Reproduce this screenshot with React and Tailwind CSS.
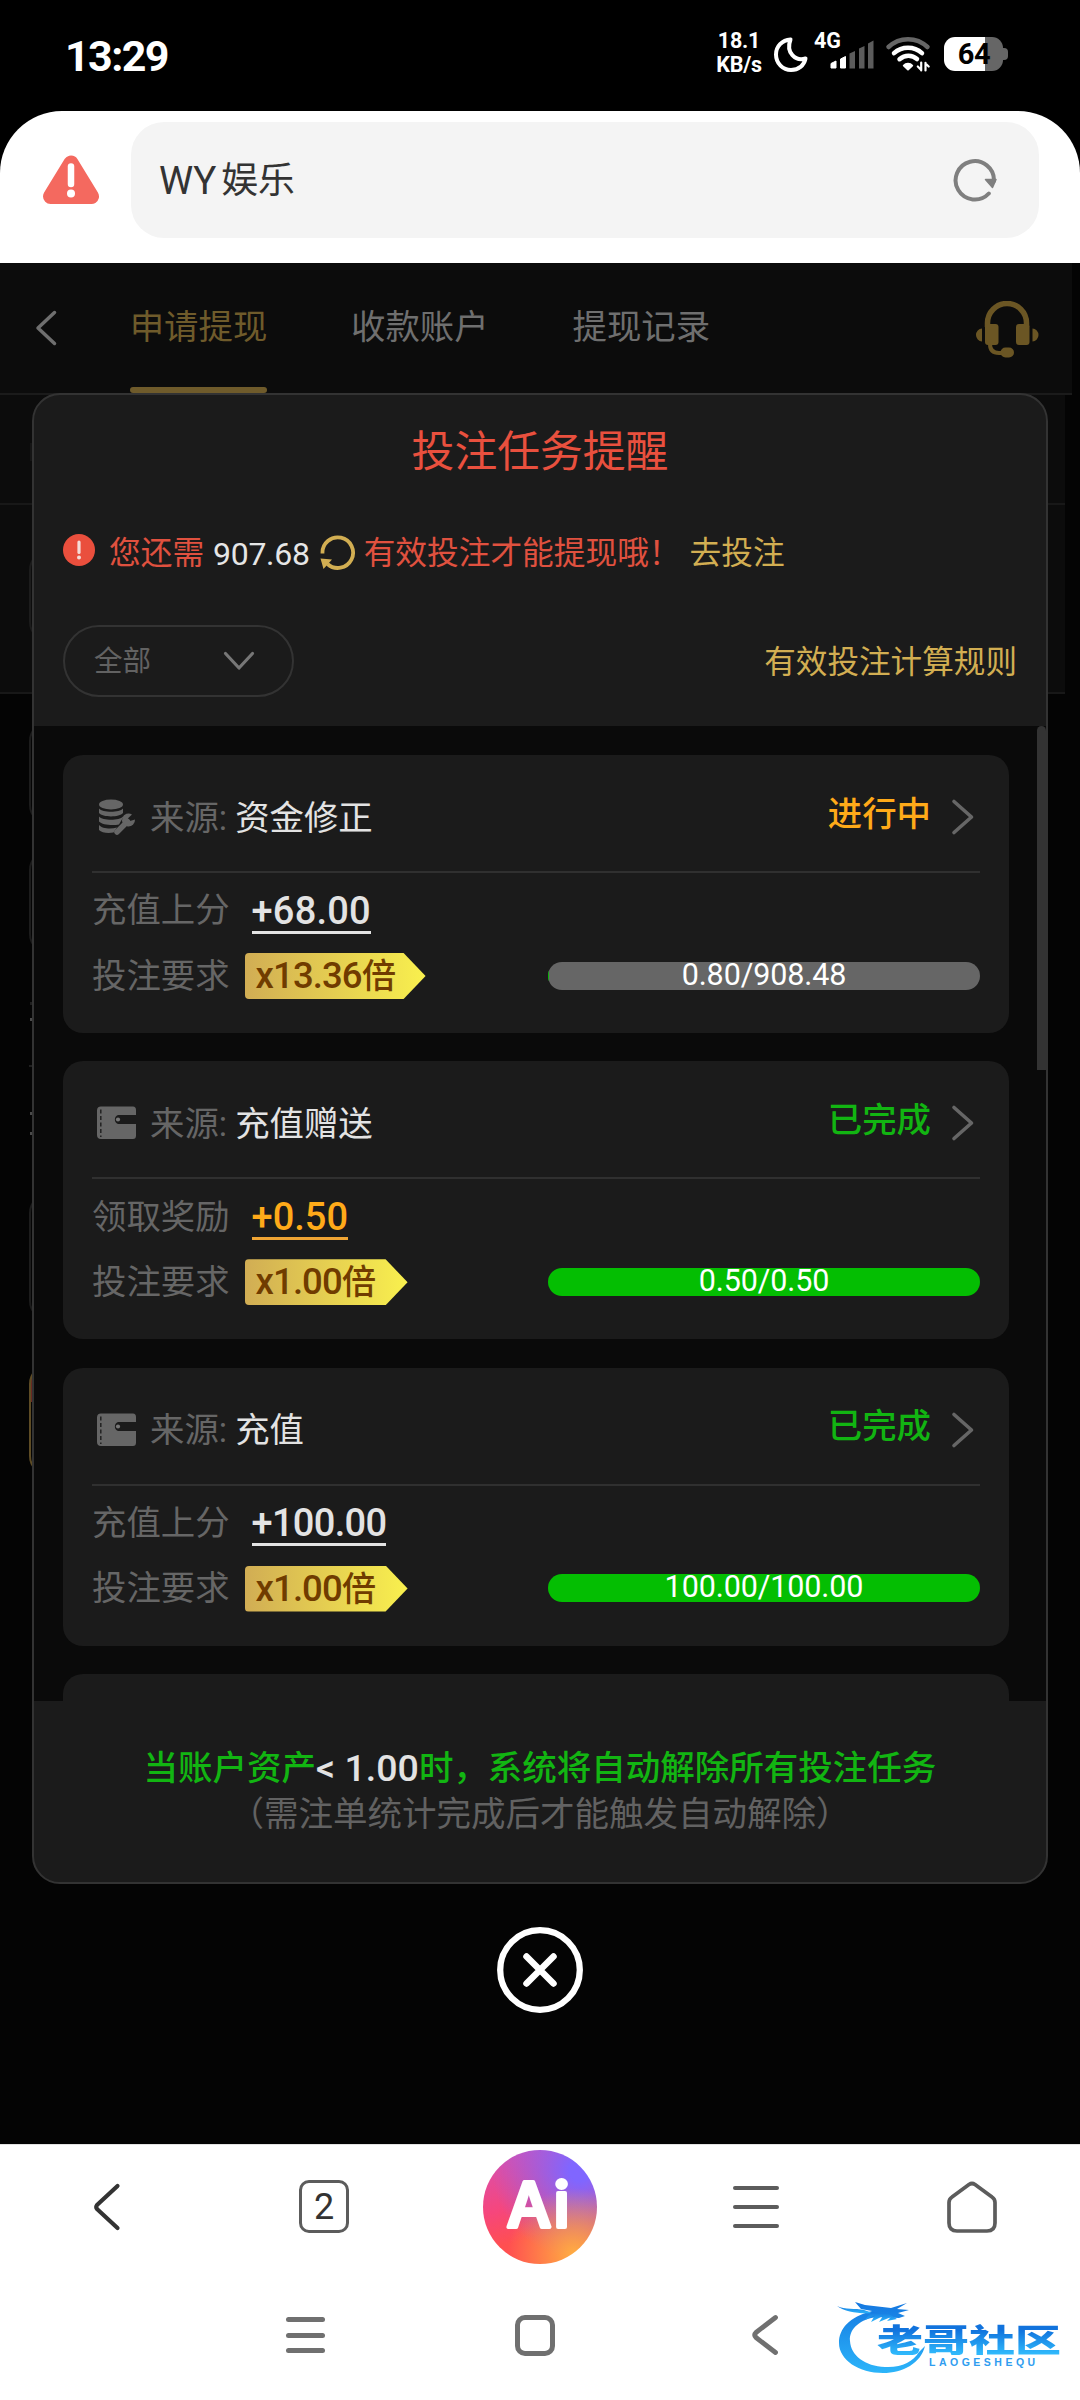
import React from "react";

const CJK = "font-['Roboto','Noto_Sans_CJK_SC',sans-serif]";

/* ---------- status bar ---------- */

function SignalBars() {
  return (
    <svg width="45" height="30" viewBox="0 0 45 30">
      <path d="M1 29V24.5L6 22V29Z" fill="#fff" stroke="#fff" strokeWidth="1" strokeLinejoin="round" />
      <path d="M10.500 29V20L15.500 17.500V29Z" fill="#fff" stroke="#fff" strokeWidth="1" strokeLinejoin="round" />
      <g fill="#5c5c5c">
        <path d="M19.500 29.500V14.500L25 12V29.500Z" />
        <path d="M29 29.500V9.500L34.500 7V29.500Z" />
        <path d="M38 29.500V4.500L43.500 1.500V29.500Z" />
      </g>
    </svg>
  );
}

function Wifi() {
  return (
    <svg width="46" height="36" viewBox="0 0 46 36" fill="none" strokeLinecap="round">
      <path d="M3.500 11C14.500 .5 31.500 .5 42.500 11" stroke="#666" strokeWidth="4.500" />
      <path d="M9 17.200C17 10 29 10 37 17.200" stroke="#fff" strokeWidth="4.500" />
      <path d="M14.500 23.200C20 18.600 27 18.600 32 23" stroke="#fff" strokeWidth="4.500" />
      <path d="M18.800 29.600C21 27 25 27 27.200 29.600L23 33.500Z" fill="#fff" stroke="#fff" strokeWidth="2" strokeLinejoin="round" />
      <path d="M36.200 34.500V26.500M36.200 34L32.800 30.500M40.500 34.500V26.800M40.500 27.500L43.700 30.500" stroke="#fff" strokeWidth="2.200" />
    </svg>
  );
}

function StatusBar() {
  return (
    <div className="flex h-[111px] items-start bg-black pl-[65px] pr-[72px] font-['Roboto',sans-serif] text-white">
      <div className="mt-[34px] flex-1 text-[43px] font-bold leading-[44px] tracking-[-1.600px]">13:29</div>
      <div className="mt-[29px] w-[48px] text-center text-[21.500px] font-bold leading-[23.500px] tracking-[-0.2px]">
        <div>18.1</div>
        <div>KB/s</div>
      </div>
      <svg className="ml-[10px] mt-[36px]" width="36" height="37" viewBox="0 0 36 37" fill="none" stroke="#fff" strokeWidth="4" strokeLinejoin="round">
        <path d="M17.500 3.500C9 4 3 10.500 3 18.500C3 27.500 10 34 18 34C25.500 34 31 29.500 32.500 22.500C22.500 25.500 12.500 17 17.500 3.500Z" />
      </svg>
      <div className="ml-[5px] mt-[29px] w-[16px] whitespace-nowrap text-[21.500px] font-bold leading-[23.500px]">4G</div>
      <div className="mt-[39px]">
        <SignalBars />
      </div>
      <div className="ml-[10px] mt-[36px]">
        <Wifi />
      </div>
      <div className="ml-[13px] mt-[37px] flex items-center">
        <div className="flex h-[34px] w-[59px] items-center justify-center rounded-[11px] bg-[linear-gradient(90deg,#fff_41px,#666_41px)] text-[29px] font-bold leading-none tracking-[-0.5px] text-black">
          <span className="ml-[1px]">64</span>
        </div>
        <div className="h-[12px] w-[5px] rounded-r-[4px] bg-[#666]" />
      </div>
    </div>
  );
}

/* ---------- browser bar ---------- */

function BrowserBar() {
  return (
    <div className="bg-black">
      <div className="flex h-[152px] items-start rounded-t-[62px] bg-white pl-[42px] pr-[41px] pt-[11px]">
        <svg className="mt-[32px]" width="58" height="51" viewBox="0 0 58 51">
          <path d="M29 9L49.500 42.500H8.500Z" fill="#f4695f" stroke="#f4695f" strokeWidth="15" strokeLinejoin="round" />
          <path d="M29 12.500V30" stroke="#fff" strokeWidth="6.500" strokeLinecap="round" />
          <circle cx="29" cy="39.500" r="4" fill="#fff" />
        </svg>
        <div className={`ml-[31px] flex h-[116px] flex-1 items-center justify-between rounded-[33px] bg-[#f4f4f4] pl-[28px] pr-[41px] text-[#333] ${CJK}`}>
          <div className="flex items-center whitespace-nowrap pt-[2px] text-[36.800px] leading-none">
            <span className="text-[38.500px]">WY</span>
            <span className="ml-[5px]">娱乐</span>
          </div>
          <svg className="-mt-[2px]" width="46" height="46" viewBox="0 0 46 46" fill="none">
            <path d="M36.800 37.500A19.200 19.200 0 1 1 42 25" stroke="#7f7f7f" strokeWidth="4" strokeLinecap="round" />
            <path d="M33.500 23.500H44L40.500 31.500Z" fill="#7f7f7f" stroke="#7f7f7f" strokeWidth="1.500" strokeLinejoin="round" />
          </svg>
        </div>
      </div>
    </div>
  );
}

/* ---------- dimmed page behind the dialog ---------- */

function PageTabs() {
  return (
    <div className={`flex h-[132px] w-[1072px] items-start whitespace-nowrap border-b-2 border-[#1b1b1b] bg-[#0c0c0c] pl-[34px] text-[34.400px] text-[#6f6f6f] ${CJK}`}>
      <svg className="mt-[46px]" width="24" height="38" viewBox="0 0 24 38" fill="none" stroke="#6f6f6f" strokeWidth="3.500" strokeLinecap="round" strokeLinejoin="round">
        <path d="M20.500 3.500L4 19L20.500 34.500" />
      </svg>
      <div className="ml-[72px] flex h-[130px] w-[137px] flex-col items-center justify-between text-[#6f5b2b]">
        <span className="mt-[40px] leading-[48px]">申请提现</span>
        <span className="h-[6px] w-full rounded-full bg-[#6f5b2b]" />
      </div>
      <span className="ml-[84px] mt-[40px] leading-[48px]">收款账户</span>
      <span className="ml-[84px] mt-[40px] leading-[48px]">提现记录</span>
      <svg className="ml-auto mr-[33px] mt-[38px]" width="64" height="58" viewBox="0 0 64 58" fill="none">
        <path d="M12.500 26V22A19.500 19.500 0 0 1 51.500 22V26" stroke="#6b5624" strokeWidth="5.500" />
        <rect x="10" y="23" width="13.500" height="21" rx="3" fill="#6b5624" />
        <rect x="41" y="23" width="13.500" height="21" rx="3" fill="#6b5624" />
        <path d="M7 27.500A6 6.500 0 0 0 7 40.500ZM57.500 27.500A6 6.500 0 0 1 57.500 40.500Z" fill="#6b5624" />
        <path d="M15 43C15 49 18 52 24 52H29" stroke="#6b5624" strokeWidth="4" />
        <rect x="25.500" y="46.500" width="13.500" height="10" rx="5" fill="#6b5624" />
      </svg>
    </div>
  );
}

function Backdrop() {
  return (
    <div>
      <PageTabs />
      <div className="h-[110px] w-[1065px] border-b-2 border-[#181818] bg-[#0c0c0c] pl-[30px] pt-[48px]">
        <div className="h-[18px] w-[3px] bg-[#151515]" />
      </div>
      <div className="h-[189px] w-[1065px] border-b-2 border-[#181818] bg-[#0c0c0c] pl-[29px] pt-[45px]">
        <div className="h-[92px] w-[960px] rounded-[20px] border-2 border-[#1c1c1c]" />
      </div>
      <div className="pl-[29px] pt-[27px]">
        <div className="h-[104px] w-[960px] rounded-[20px] border-2 border-[#1c1c1c]" />
        <div className="mt-[25px] h-[104px] w-[960px] rounded-[20px] border-2 border-[#1c1c1c]" />
        <div className="ml-[1px] mt-[48px] h-[3px] w-[3px] bg-[#1f1f1f]" />
        <div className="ml-[1px] mt-[13px] h-[3px] w-[3px] bg-[#4a4a4a]" />
        <div className="mt-[44px] h-[2px] w-[960px] bg-[#1f1f1f]" />
        <div className="ml-[1px] mt-[45px] h-[3px] w-[3px] bg-[#4a4a4a]" />
        <div className="ml-[1px] mt-[17px] h-[3px] w-[3px] bg-[#4a4a4a]" />
        <div className="mt-[58px] h-[128px] w-[960px] rounded-[20px] border-2 border-[#1c1c1c]" />
        <div className="mt-[43px] h-[112px] w-[960px] rounded-[20px] border-2 border-[#5e4c24] bg-[linear-gradient(180deg,#6b2a22_36px,#050505_36px)]" />
      </div>
    </div>
  );
}

/* ---------- dialog ---------- */

function DatabaseIcon() {
  return (
    <svg width="38" height="36" viewBox="0 0 38 36" fill="#666">
      <ellipse cx="13" cy="5.500" rx="12" ry="5" />
      <path d="M1 9.500C4.500 13.800 21.500 13.800 25 9.500V14C21.500 18.500 4.500 18.500 1 14Z" />
      <path d="M1 17.500C4.500 21.800 21.500 21.800 25 17.500V18.500L21 25.500C14.500 26.800 4 26 1 22.500Z" />
      <path d="M1 26C4 29.800 13 30.500 19 28.500L15.500 33.500C9 34.500 3.500 33.500 1 31Z" />
      <path d="M19 33L29.500 22.500" stroke="#666" strokeWidth="5.500" strokeLinecap="round" />
      <path d="M34 15.500A6.500 6.500 0 1 0 37 20.500L32 22L29.800 19.500Z" />
    </svg>
  );
}

function WalletIcon() {
  return (
    <svg width="41" height="34" viewBox="0 0 41 34">
      <path d="M5 .5H37Q40 .5 40 4V9H22A4.800 4.800 0 0 0 22 18H40V29.500Q40 33 37 33H5Q1 33 1 29V4.500Q1 .5 5 .5Z" fill="#666" />
      <circle cx="22" cy="13.500" r="2.100" fill="#777" />
      <path d="M4.800 3.500V31" stroke="#222" strokeWidth="1.500" strokeDasharray="4 2.500" />
    </svg>
  );
}

const SOURCE_ICONS = { database: DatabaseIcon, wallet: WalletIcon };

function ProgressBar({ percent, children }) {
  return (
    <div className="relative ml-auto mb-[1px] h-[28px] w-[432px]">
      <div className="h-full overflow-hidden rounded-full bg-[#666]">
        <div className="h-full bg-[#04be02]" style={{ width: `${percent}%` }} />
      </div>
      <div className="absolute inset-x-0 -top-[5px] text-center text-[30.500px] leading-[36px] tracking-[-0.1px] text-white">{children}</div>
    </div>
  );
}

function TaskCard({ task }) {
  const Icon = SOURCE_ICONS[task.icon];
  return (
    <div className="flex h-[278px] shrink-0 flex-col rounded-[20px] bg-[#1b1b1b] px-[29px] text-[34.400px] text-[#666]">
      <div className="flex h-[118px] shrink-0 items-center border-b-2 border-[#303030] pl-[4px] pt-[8px]">
        <div className="flex w-[41px] justify-center">
          <Icon />
        </div>
        <span className="ml-[13px] mt-[2px] leading-none">来源:</span>
        <span className="ml-[8px] mt-[2px] leading-none text-[#e3e3e3]">{task.source}</span>
        <span className={`mb-[6px] ml-auto font-medium leading-none ${task.done ? "text-[#12b512]" : "text-[#ffaa19]"}`}>
          {task.done ? "已完成" : "进行中"}
        </span>
        <svg className="ml-[19px] mr-[4px]" width="26" height="40" viewBox="0 0 26 40" fill="none" stroke="#666" strokeWidth="3.600" strokeLinecap="round" strokeLinejoin="round">
          <path d="M4 4.500L21.500 20L4 35.500" />
        </svg>
      </div>
      <div className="flex h-[75px] items-center">
        <span className="leading-none">{task.amountLabel}</span>
        <span
          className={`ml-[22px] h-[46px] whitespace-nowrap border-b-[3px] text-[38px] font-medium leading-[46px] ${task.amountStyle} ${
            task.bonus ? "border-[#f0a534] text-[#ffaa19]" : "border-[#e3e3e3] text-[#e3e3e3]"
          }`}
        >
          {task.amount}
        </span>
      </div>
      <div className="mt-[5px] flex h-[46px] items-center">
        <span className="leading-none">投注要求</span>
        <div
          className={`ml-[15px] h-[46px] overflow-hidden whitespace-nowrap rounded-l-[4px] bg-[linear-gradient(90deg,#d1ad54,#f9f04e)] pl-[11px] leading-[45px] text-[#703c00] [clip-path:polygon(0_0,calc(100%-22px)_0,100%_50%,calc(100%-22px)_100%,0_100%)] ${task.badgeWidth}`}
        >
          <span className="text-[36.500px] font-medium tracking-[-0.9px]">{task.multiple}</span>
          <span className="font-medium">倍</span>
        </div>
        <ProgressBar percent={task.percent}>{task.progress}</ProgressBar>
      </div>
    </div>
  );
}

const TASKS = [
  { icon: "database", source: "资金修正", done: false, amountLabel: "充值上分", amount: "+68.00", amountStyle: "tracking-[0.2px]", multiple: "x13.36", badgeWidth: "w-[181px]", progress: "0.80/908.48", percent: 0.3 },
  { icon: "wallet", source: "充值赠送", done: true, amountLabel: "领取奖励", amount: "+0.50", amountStyle: "tracking-[0px]", bonus: true, multiple: "x1.00", badgeWidth: "w-[163px]", progress: "0.50/0.50", percent: 100 },
  { icon: "wallet", source: "充值", done: true, amountLabel: "充值上分", amount: "+100.00", amountStyle: "tracking-[-0.700px]", multiple: "x1.00", badgeWidth: "w-[163px]", progress: "100.00/100.00", percent: 100 },
];

function TaskDialog() {
  return (
    <div className={`flex h-[1491px] w-[1016px] flex-col overflow-hidden rounded-[28px] border-2 border-[#333] bg-[#1b1b1b] ${CJK}`}>
      <div className="flex h-[331px] shrink-0 flex-col px-[29px]">
        <h1 className="mt-[32px] text-center text-[42.800px] leading-[50px] text-[#e9503e]">投注任务提醒</h1>
        <div className="mt-[54px] flex h-[44px] items-center whitespace-nowrap text-[31.700px] leading-none text-[#e0513f]">
          <svg className="-mt-[7px]" width="32" height="32" viewBox="0 0 32 32">
            <circle cx="16" cy="16" r="16" fill="#ea4f3d" />
            <path d="M16 8V18.500" stroke="#f5dcd8" strokeWidth="3.200" strokeLinecap="round" />
            <circle cx="16" cy="23.500" r="2" fill="#f5dcd8" />
          </svg>
          <span className="ml-[14px] mt-[2px]">您还需</span>
          <span className="ml-[9px] mt-[2px] text-[32px] tracking-[-0.300px] text-[#e6e6e6]">907.68</span>
          <svg className="-mt-[2px] ml-[8px]" width="38" height="38" viewBox="0 0 38 38" fill="none">
            <path d="M4.500 20.500A15.300 15.300 0 1 1 9.500 31" stroke="#d2ae52" strokeWidth="3.800" />
            <path d="M2.500 25.500L14 26.500L5.500 36Z" fill="#d2ae52" />
          </svg>
          <span className="ml-[8px] mt-[2px]">有效投注才能提现哦！</span>
          <span className="ml-[9px] mt-[2px] text-[#d2ae52]">去投注</span>
        </div>
        <div className="mt-[50px] flex h-[72px] items-center justify-between">
          <div className="flex h-[72px] w-[231px] items-center justify-between rounded-full border-2 border-[#333] pl-[29px] pr-[36px] text-[28.500px] leading-none text-[#626262]">
            <span className="mt-[2px]">全部</span>
            <svg width="34" height="22" viewBox="0 0 34 22" fill="none" stroke="#777" strokeWidth="3.200" strokeLinecap="round" strokeLinejoin="round">
              <path d="M3.500 3.500L17 18L30.500 3.500" />
            </svg>
          </div>
          <span className="mt-[3px] text-[31.600px] leading-none text-[#d2ae52]">有效投注计算规则</span>
        </div>
      </div>
      <div className="flex h-[975px] shrink-0 bg-[#0a0a0a]">
        <div className="ml-[29px] flex w-[946px] flex-col gap-[28.300px] overflow-hidden pt-[29px]">
          {TASKS.map((task) => (
            <TaskCard key={task.progress} task={task} />
          ))}
          <div className="h-[40px] shrink-0 rounded-t-[20px] bg-[#1b1b1b]" />
        </div>
        <div className="ml-auto h-[344px] w-[9px] rounded-t-[5px] bg-[#333]" />
      </div>
      <div className="flex flex-col items-center whitespace-nowrap pt-[44px] text-[34.500px] text-[#626262]">
        <div className="flex items-center font-medium leading-[46px] text-[#12b512]">
          <span>当账户资产</span>
          <span className="text-[37.500px] text-[#e3e3e3]">&lt; 1.00</span>
          <span>时，系统将自动解除所有投注任务</span>
        </div>
        <div className="leading-[46px]">（需注单统计完成后才能触发自动解除）</div>
      </div>
    </div>
  );
}

/* ---------- bottom bars ---------- */

function AiButton() {
  return (
    <div className="flex size-[114px] items-center justify-center rounded-full bg-[radial-gradient(circle_at_80%_92%,#ffae42_0%,#ffae4200_48%),radial-gradient(circle_at_85%_18%,#8066ff_8%,#8066ff00_65%),linear-gradient(165deg,#d850b0_5%,#f6467c_45%,#ff4f50_70%)]">
      <svg width="114" height="114" viewBox="0 0 114 114">
        <text x="24" y="76.500" fontFamily="Inter, sans-serif" fontWeight="500" fontSize="62" fill="#fff" stroke="#fff" strokeWidth="4.200" strokeLinejoin="round" letterSpacing="2.500">
          Ai
        </text>
      </svg>
    </div>
  );
}

function BrowserNav() {
  return (
    <div className="flex h-[126px] items-center border-t border-[#e2e2e2] bg-white pb-[2px]">
      <div className="flex flex-1 justify-center">
        <svg className="-ml-[3px]" width="30" height="52" viewBox="0 0 30 52" fill="none" stroke="#333" strokeWidth="4.200" strokeLinecap="round" strokeLinejoin="round">
          <path d="M25.500 5L5 24Q3.500 26 5 28L25.500 47" />
        </svg>
      </div>
      <div className="flex flex-1 justify-center">
        <div className="flex h-[53px] w-[50px] items-center justify-center rounded-[10px] border-[3.500px] border-[#5c5c5c] font-['Roboto',sans-serif] text-[36px] leading-none text-[#333]">
          2
        </div>
      </div>
      <div className="flex flex-1 justify-center">
        <AiButton />
      </div>
      <div className="flex flex-1 justify-center">
        <div className="flex w-[46px] flex-col gap-[15px]">
          <div className="h-[4px] rounded-full bg-[#5c5c5c]" />
          <div className="h-[4px] rounded-full bg-[#5c5c5c]" />
          <div className="h-[4px] rounded-full bg-[#5c5c5c]" />
        </div>
      </div>
      <div className="flex flex-1 justify-center">
        <svg width="54" height="56" viewBox="0 0 54 56" fill="none" stroke="#5c5c5c" strokeWidth="3.700" strokeLinejoin="round">
          <path d="M4 23.500Q4 20 7 18L24 5.500Q27 3.500 30 5.500L47 18Q50 20 50 23.500V44Q50 52 42 52H12Q4 52 4 44Z" />
        </svg>
      </div>
    </div>
  );
}

function Watermark() {
  return (
    <div className="relative h-[76px] w-[226px]">
      <svg width="226" height="76" viewBox="0 0 226 76">
        <defs>
          <linearGradient id="swirl" x1="0" y1="0" x2="0" y2="1">
            <stop offset="0" stopColor="#1477e0" />
            <stop offset="1" stopColor="#2cb5fa" />
          </linearGradient>
        </defs>
        <g fill="url(#swirl)">
          <path d="M35 11C12 17 2 29 2 43C2 60 22 73 46 73C66 73 84 63 88 46L82 52C76 62 64 68 48 67C28 66 14 56 13 41C12 28 24 19 40 17L62 18L68 16L61 13L72 10L60 9L70 3L54 8L28 5L18 2L24 9Z" />
          <path d="M0 6C8 10 18 8 27 10L36 13C22 14 8 12 0 6Z" />
          <path d="M28 20L38 15L34 22L46 16L42 22L54 17L50 21L60 19L52 14L34 12Z" />
        </g>
      </svg>
      <div className="absolute left-[40px] top-[22px] origin-left scale-x-[1.460] whitespace-nowrap bg-[linear-gradient(180deg,#1173dd_25%,#2fb8fb_95%)] bg-clip-text font-['Noto_Sans_CJK_SC',sans-serif] text-[31.500px] font-black leading-[33px] text-transparent">
        老哥社区
      </div>
      <div className="absolute left-[92px] top-[56px] whitespace-nowrap font-['Liberation_Sans',sans-serif] text-[10.500px] font-bold leading-[12px] tracking-[3.500px] text-[#2f9df0]">
        LAOGESHEQU
      </div>
    </div>
  );
}

function SystemNav() {
  return (
    <div className="flex flex-1 items-center bg-white pl-[286px]">
      <div className="flex w-[39px] flex-col gap-[10.300px]">
        <div className="h-[5px] rounded-full bg-[#707070]" />
        <div className="h-[5px] rounded-full bg-[#707070]" />
        <div className="h-[5px] rounded-full bg-[#707070]" />
      </div>
      <div className="ml-[190px] h-[41px] w-[40px] rounded-[10px] border-[5px] border-[#707070]" />
      <svg className="ml-[195px]" width="30" height="44" viewBox="0 0 30 44" fill="none" stroke="#707070" strokeWidth="4.800" strokeLinecap="round" strokeLinejoin="round">
        <path d="M25.500 4.500L6 19.500Q3.500 22 6 24.500L25.500 39.500" />
      </svg>
      <div className="ml-[57px] mt-[5px]">
        <Watermark />
      </div>
    </div>
  );
}

export default function App() {
  return (
    <div className="flex h-[2400px] w-[1080px] flex-col overflow-hidden bg-[#030303]">
      <StatusBar />
      <BrowserBar />
      <div className="relative h-[1881px] shrink-0 bg-[#040404]">
        <Backdrop />
        <div className="absolute inset-0 flex flex-col items-center pt-[130px]">
          <TaskDialog />
          <svg className="mt-[43px] shrink-0" width="86" height="86" viewBox="0 0 86 86" fill="none" stroke="#fff">
            <circle cx="43" cy="43" r="39.800" strokeWidth="6.300" />
            <path d="M29.500 29.500L56.500 56.500M56.500 29.500L29.500 56.500" strokeWidth="6.500" strokeLinecap="round" />
          </svg>
        </div>
      </div>
      <BrowserNav />
      <SystemNav />
    </div>
  );
}
